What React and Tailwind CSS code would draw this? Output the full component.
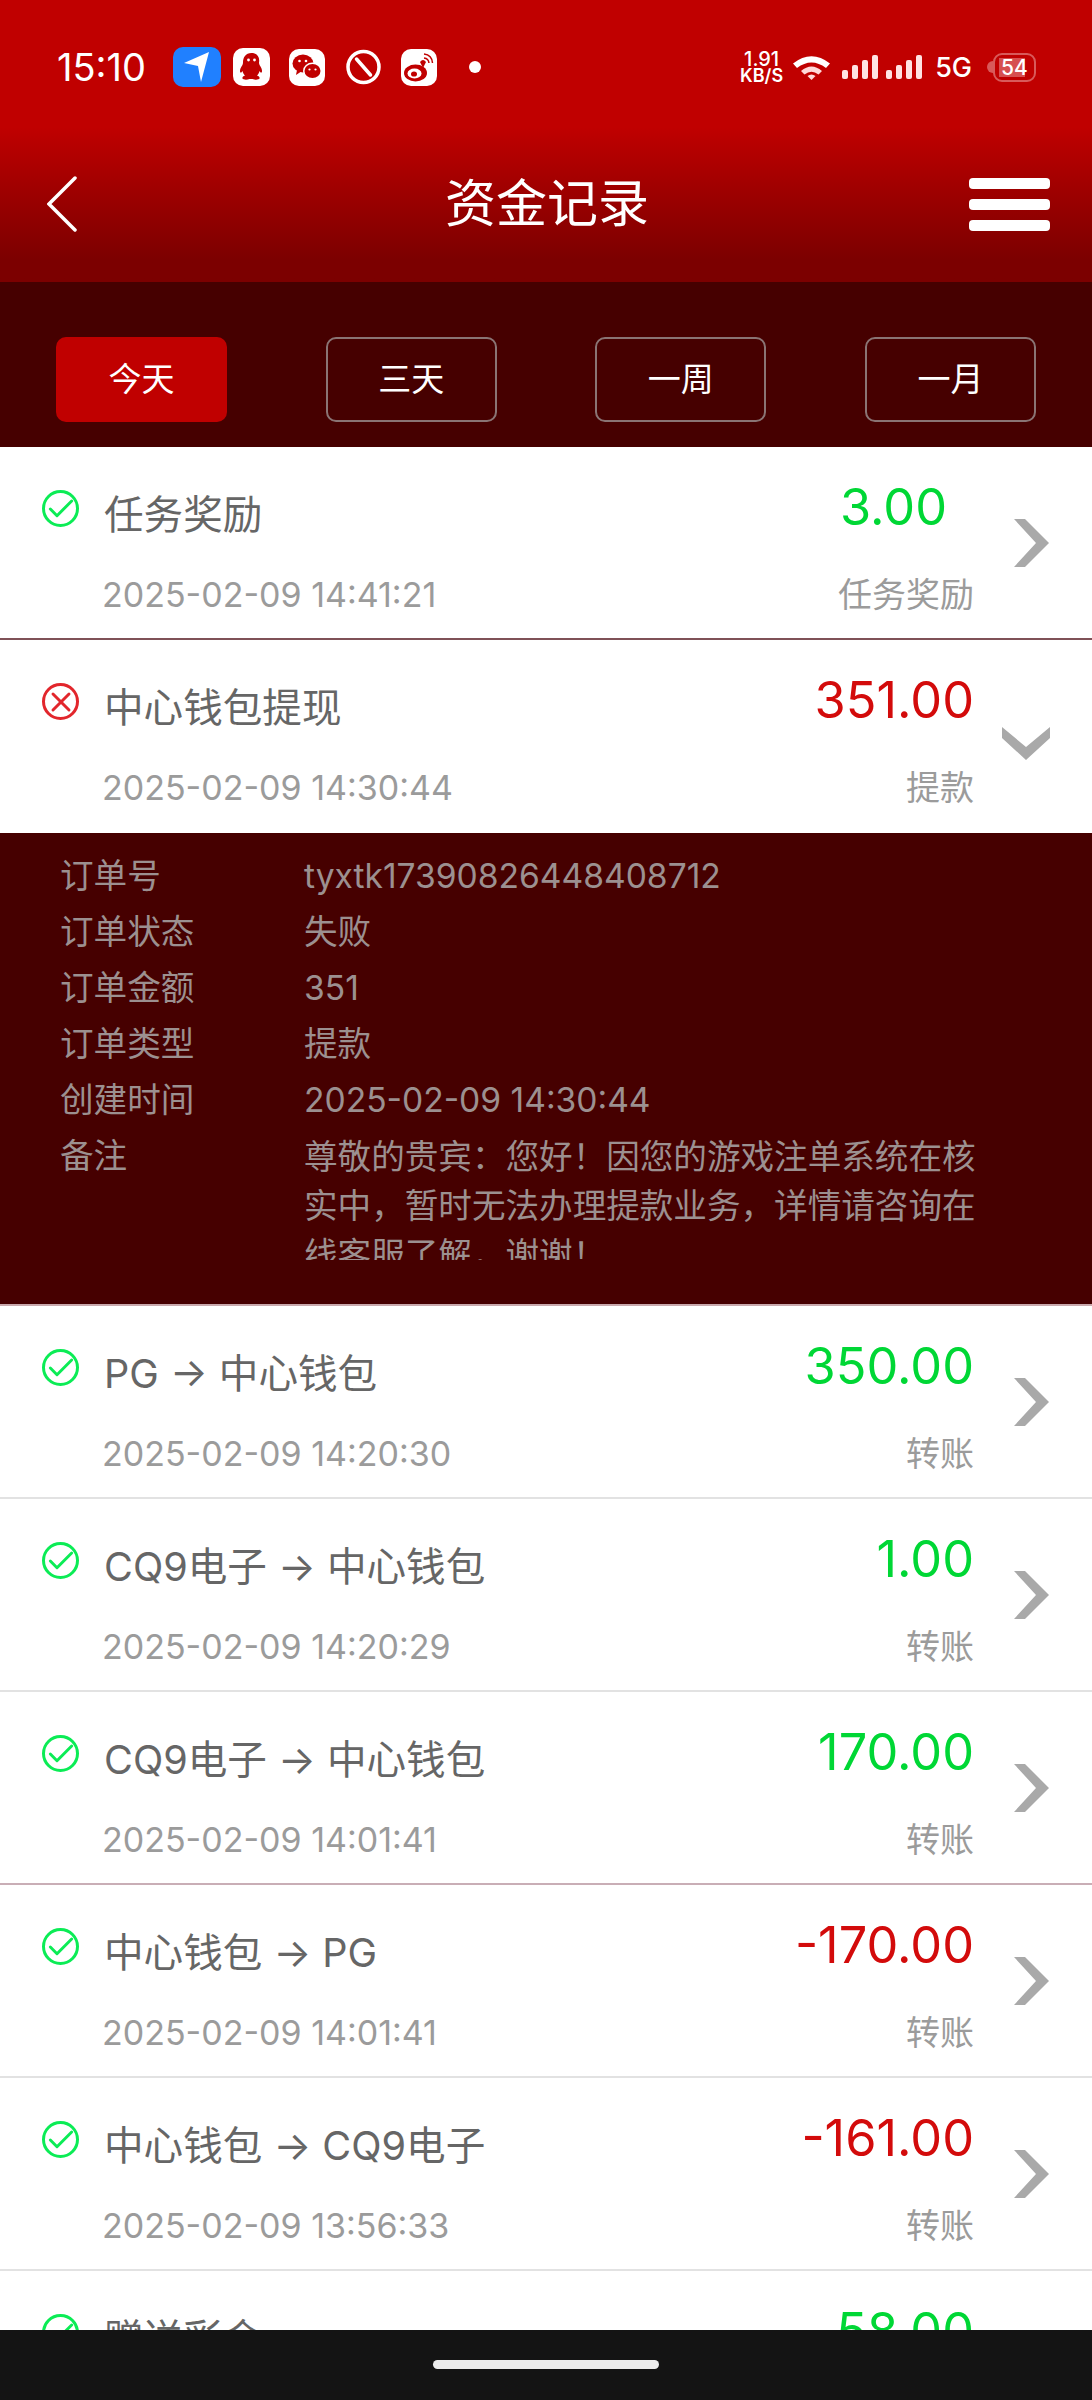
import { Check, X } from 'lucide-react'

const rows = [
  { title: '任务奖励', amount: '3.00', time: '2025-02-09 14:41:21', type: '任务奖励', nudge: true, line: 'border-[#7f5157]' },
  { title: '中心钱包提现', amount: '351.00', time: '2025-02-09 14:30:44', type: '提款', failed: true, red: true, open: true },
  { title: 'PG → 中心钱包', amount: '350.00', time: '2025-02-09 14:20:30', type: '转账', line: 'border-[#e2e2e2]' },
  { title: 'CQ9电子 → 中心钱包', amount: '1.00', time: '2025-02-09 14:20:29', type: '转账', line: 'border-[#e2e2e2]' },
  { title: 'CQ9电子 → 中心钱包', amount: '170.00', time: '2025-02-09 14:01:41', type: '转账', line: 'border-[#c9aeb6]' },
  { title: '中心钱包 → PG', amount: '-170.00', time: '2025-02-09 14:01:41', type: '转账', red: true, line: 'border-[#e2e2e2]' },
  { title: '中心钱包 → CQ9电子', amount: '-161.00', time: '2025-02-09 13:56:33', type: '转账', red: true, line: 'border-[#e2e2e2]' },
  { title: '赠送彩金', amount: '58.00', time: '2025-02-09 13:50:12', type: '活动', line: 'border-[#e2e2e2]' },
]

const details = [
  ['订单号', 'tyxtk17390826448408712'],
  ['订单状态', '失败'],
  ['订单金额', '351'],
  ['订单类型', '提款'],
  ['创建时间', '2025-02-09 14:30:44'],
]

const NavArrow = () => (
  <div className="w-[48px] h-[40px] rounded-[10px] bg-[#2080ff] flex items-center justify-center">
    <svg width="26" height="30" viewBox="0 0 26 30">
      <path d="M0 11 L25 0 L17 30 L14 14 Z" fill="#fff" />
    </svg>
  </div>
)

const QQ = () => (
  <svg width="37" height="38" viewBox="0 0 37 38">
    <rect width="37" height="38" rx="10" fill="#fff" />
    <path d="M18.5 5c-6 0-8.5 4.5-8.5 9.5 0 1.5-.5 2.5-1.5 4-1.5 2.5-2 5-1 6 .7.5 1.5-.5 2-1.5.5 2 1.5 3.5 2.5 4.5-2 .8-3 1.8-2.5 3 .6 1.3 4.5 1.5 7 .5 1 0 2 0 3 0 2.5 1 6.4.8 7-.5.5-1.2-.5-2.2-2.5-3 1-1 2-2.5 2.5-4.5.5 1 1.3 2 2 1.5 1-1 .5-3.5-1-6-1-1.5-1.5-2.5-1.5-4C27 9.5 24.5 5 18.5 5z" fill="#c00000" />
    <circle cx="15.5" cy="12" r="1.4" fill="#fff" />
    <circle cx="21.5" cy="12" r="1.4" fill="#fff" />
  </svg>
)

const WeChat = () => (
  <svg width="36" height="37" viewBox="0 0 36 37">
    <rect width="36" height="37" rx="10" fill="#fff" />
    <ellipse cx="14" cy="14.5" rx="10.5" ry="9" fill="#c00000" />
    <path d="M8 21 L7 26 L13 22 Z" fill="#c00000" />
    <ellipse cx="23.5" cy="22" rx="9.5" ry="8.5" fill="#fff" />
    <ellipse cx="23.5" cy="22" rx="8" ry="7" fill="#c00000" />
    <circle cx="10.5" cy="12" r="1.3" fill="#fff" />
    <circle cx="17" cy="12" r="1.3" fill="#fff" />
    <circle cx="20.5" cy="20.5" r="1.1" fill="#fff" />
    <circle cx="26.5" cy="20.5" r="1.1" fill="#fff" />
  </svg>
)

const Compass = () => (
  <svg width="35" height="36" viewBox="0 0 35 36">
    <circle cx="17.5" cy="18" r="15.5" fill="none" stroke="#fff" strokeWidth="3.5" />
    <path d="M10.5 10 L24.5 26" stroke="#fff" strokeWidth="3.5" strokeLinecap="round" />
  </svg>
)

const Weibo = () => (
  <svg width="36" height="37" viewBox="0 0 36 37">
    <rect width="36" height="37" rx="10" fill="#fff" />
    <ellipse cx="14.5" cy="24" rx="11.5" ry="8.5" fill="#c00000" />
    <ellipse cx="13.5" cy="24.5" rx="7" ry="5" fill="#fff" />
    <ellipse cx="13" cy="25" rx="3" ry="2.6" fill="#c00000" />
    <path d="M19 13 Q22 9 25 13 L22 19 Z" fill="#c00000" />
    <path d="M23 5 Q31 6 31.5 14 M23 9 Q27.5 9.5 28 14" fill="none" stroke="#c00000" strokeWidth="1.5" />
  </svg>
)

const Wifi = () => (
  <svg width="37" height="25" viewBox="0 0 37 25">
    <path d="M0 8.5 Q18.5 -6 37 8.5 L33 13 Q18.5 2 4 13 Z" fill="#fff" />
    <path d="M8 16 Q18.5 7 29 16 L25.5 19.5 Q18.5 14 11.5 19.5 Z" fill="#ffd9d9" />
    <path d="M14.5 21 Q18.5 18 22.5 21 L18.5 25 Z" fill="#ffd9d9" />
  </svg>
)

const Signal = () => (
  <div className="flex items-end gap-[4px] h-[24px]">
    <div className="w-[6px] h-[9px] rounded-[2px] bg-[#ffe3e3]" />
    <div className="w-[6px] h-[14px] rounded-[2px] bg-[#ffe3e3]" />
    <div className="w-[6px] h-[19px] rounded-[2px] bg-[#ffe3e3]" />
    <div className="w-[6px] h-[24px] rounded-[2px] bg-[#ffe3e3]" />
  </div>
)

const StatusBar = () => (
  <div className="flex items-center h-[52px] mt-[41px] pl-[57px] pr-[56px] text-white">
    <span className="w-[116px] text-[38px] leading-none">15:10</span>
    <NavArrow />
    <div className="ml-[12px]"><QQ /></div>
    <div className="ml-[19px]"><WeChat /></div>
    <div className="ml-[21px]"><Compass /></div>
    <div className="ml-[20px]"><Weibo /></div>
    <div className="ml-[32px] w-[12px] h-[12px] rounded-full bg-white" />
    <div className="ml-auto flex flex-col items-center w-[43px] font-medium">
      <span className="text-[20px] leading-[17px]">1.91</span>
      <span className="text-[18px] leading-[16px] font-semibold whitespace-nowrap">KB/S</span>
    </div>
    <div className="ml-[10px]"><Wifi /></div>
    <div className="ml-[12px]"><Signal /></div>
    <div className="ml-[8px]"><Signal /></div>
    <span className="ml-[13px] text-[27px] leading-none font-medium">5G</span>
    <div className="ml-[15px] w-[6px] h-[12px] rounded-l-full bg-[#d85a5a]" />
    <div className="w-[43px] h-[29px] rounded-[9px] border-2 border-[#d85a5a] flex items-center justify-center relative overflow-hidden">
      <div className="absolute left-[4px] top-[3px] bottom-[3px] w-[26px] bg-[#d65050]" />
      <span className="relative text-[21px] font-medium leading-none">54</span>
    </div>
  </div>
)

const Header = () => (
  <div className="h-[282px] bg-gradient-to-b from-[#c00000] from-[45%] to-[#7c0000] to-[92%] flex flex-col">
    <StatusBar />
    <div className="flex items-center justify-between pl-[47px] pr-[42px] mt-[83px]">
      <div className="w-[78px]">
        <svg width="30" height="56" viewBox="0 0 30 56">
          <path d="M28 2 L2 28 L28 54" fill="none" stroke="#fff" strokeWidth="3.5" strokeLinecap="round" />
        </svg>
      </div>
      <span className="text-[51px] leading-[56px] text-white">资金记录</span>
      <div className="flex flex-col gap-[10px]">
        <div className="w-[81px] h-[11px] rounded-[4px] bg-white" />
        <div className="w-[81px] h-[11px] rounded-[4px] bg-white" />
        <div className="w-[81px] h-[11px] rounded-[4px] bg-white" />
      </div>
    </div>
  </div>
)

const Filters = () => (
  <div className="h-[165px] bg-[#460000] flex items-start justify-between px-[56px] pt-[55px] shrink-0">
    {['今天', '三天', '一周', '一月'].map((t, i) => (
      <div
        key={t}
        className={
          i === 0
            ? 'w-[171px] h-[85px] rounded-[10px] bg-[#c00000] flex items-center justify-center text-[33px] text-white'
            : 'w-[171px] h-[85px] rounded-[10px] border-2 border-[#8a7474] flex items-center justify-center text-[33px] text-white'
        }
      >
        {t}
      </div>
    ))}
  </div>
)

const StatusIcon = ({ failed }) => (
  <div
    className={
      failed
        ? 'w-[37px] h-[37px] rounded-full border-[3px] border-[#e2262c] flex items-center justify-center shrink-0'
        : 'w-[37px] h-[37px] rounded-full border-[3px] border-[#0bec55] flex items-center justify-center shrink-0'
    }
  >
    {failed ? (
      <X size={32} color="#e2262c" strokeWidth={2.2} className="shrink-0" />
    ) : (
      <Check size={32} color="#0bec55" strokeWidth={2.2} className="shrink-0" />
    )}
  </div>
)

const Row = ({ row }) => (
  <div className={`flex items-center h-[193px] pl-[42px] pr-[42px] bg-white shrink-0 ${row.open ? '' : `border-b-2 ${row.line}`}`}>
    <div className="flex-1 min-w-0 self-start pt-[32px]">
      <div className="flex items-start justify-between h-[76px]">
        <div className="flex items-start pt-[11px]">
          <StatusIcon failed={row.failed} />
          <span className="ml-[25px] text-[39.6px] leading-[50px] text-[#666]">{row.title}</span>
        </div>
        <span
          className={`-mt-px text-[50.5px] leading-[58px] ${row.red ? 'text-[#d30b0b]' : 'text-[#00d735]'} ${row.nudge ? 'mr-[27px]' : ''}`}
        >
          {row.amount}
        </span>
      </div>
      <div className="flex items-center justify-between pl-[60px] mt-[17px] text-[#9b9b9b]">
        <span className="text-[34px] leading-[46px]">{row.time}</span>
        <span className="text-[34px] leading-[46px]">{row.type}</span>
      </div>
    </div>
    <div className="w-[76px] flex justify-end shrink-0">
      {row.open ? (
        <svg width="48" height="33" viewBox="0 0 48 33" className="mt-[14px]">
          <polygon points="0,0 0,11 24,33 48,11 48,0 24,20" fill="#a9a9a9" />
        </svg>
      ) : (
        <svg width="35" height="48" viewBox="0 0 35 48" className="mr-[1px]">
          <polygon points="0,0 11,0 35,24 11,48 0,48 22,24" fill="#a9a9a9" />
        </svg>
      )}
    </div>
  </div>
)

const Detail = () => (
  <div className="h-[473px] bg-[#460000] border-b-2 border-[#c9a9ad] pl-[60px] pr-[100px] pt-[15px] text-[33.6px] text-[#9c9090] shrink-0">
    {details.map(([k, v]) => (
      <div key={k} className="flex h-[56px] items-center">
        <span className="w-[244px] shrink-0">{k}</span>
        <span>{v}</span>
      </div>
    ))}
    <div className="flex">
      <span className="w-[244px] shrink-0 leading-[56px]">备注</span>
      <div className="h-[132px] overflow-hidden leading-[49px] pt-[4px]">
        尊敬的贵宾：您好！因您的游戏注单系统在核实中，暂时无法办理提款业务，详情请咨询在线客服了解，谢谢！
      </div>
    </div>
  </div>
)

export default function App() {
  return (
    <div className="w-[1092px] h-[2400px] flex flex-col overflow-hidden bg-white font-['Inter','Noto_Sans_CJK_SC',sans-serif]">
      <Header />
      <Filters />
      <div className="flex-1 min-h-0 overflow-hidden flex flex-col">
        {rows.map((row) => (
          <div key={row.title + row.amount} className="contents">
            <Row row={row} />
            {row.open && <Detail />}
          </div>
        ))}
      </div>
      <div className="h-[70px] bg-[#141414] flex justify-center pt-[30px] shrink-0">
        <div className="w-[226px] h-[9px] rounded-[5px] bg-[#ececec]" />
      </div>
    </div>
  )
}
